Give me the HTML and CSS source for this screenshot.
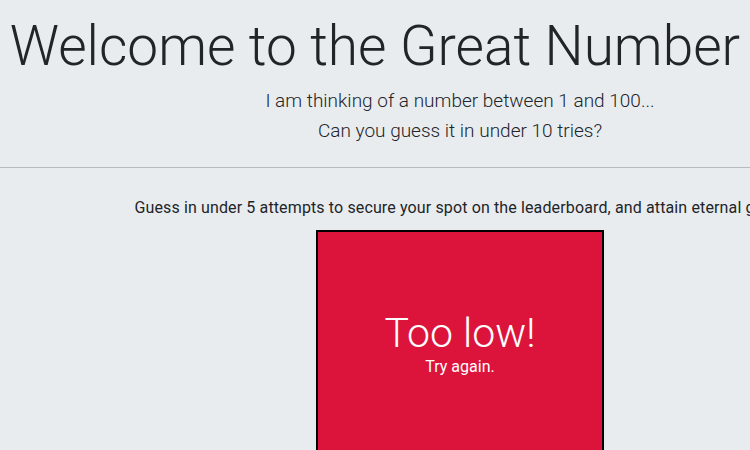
FILE: index.html
```html
<!DOCTYPE html>
<html lang="en">
<head>
<meta charset="utf-8">
<title>Great Number Game</title>
<link rel="stylesheet" href="styles.css">
</head>
<body>
<div class="page">
  <header class="jumbo">
    <h1 class="title">Welcome to the Great Number Game!</h1>
    <p class="lead">I am thinking of a number between 1 and 100...<br>Can you guess it in under 10 tries?</p>
  </header>
  <hr class="rule">
  <main class="content">
    <p class="note">Guess in under 5 attempts to secure your spot on the leaderboard, and attain eternal glory!</p>
    <div class="result">
      <h2 class="result-title">Too low!</h2>
      <p class="result-sub">Try again.</p>
    </div>
  </main>
</div>
</body>
</html>
```

FILE: styles.css
```css
html, body {
  margin: 0;
  padding: 0;
  background: #e9ecef;
  overflow: hidden;
}
.page {
  width: 920px;
  font-family: Roboto, "Open Sans", sans-serif;
  color: #212529;
}
.jumbo {
  text-align: center;
  padding: 13px 0 0;
}
.title {
  margin: 0;
  font-size: 55px;
  font-weight: 300;
  line-height: 66px;
  white-space: nowrap;
}
.lead {
  margin: 7px 0 0;
  font-size: 19px;
  font-weight: 300;
  line-height: 30px;
}
.rule {
  margin: 21px 0 0;
  border: 0;
  border-top: 1px solid #b8babd;
}
.content {
  text-align: center;
  padding-top: 28px;
}
.note {
  margin: 0;
  font-size: 16px;
  letter-spacing: 0.13px;
  line-height: 24px;
  white-space: nowrap;
}
.result {
  margin: 10px auto 0;
  width: 288px;
  height: 240px;
  background: #dc143c;
  border: 2px solid #000;
  color: #fff;
  display: flex;
  flex-direction: column;
  align-items: center;
  padding-top: 77px;
  box-sizing: border-box;
}
.result-title {
  margin: 0;
  font-size: 41px;
  font-weight: 300;
  line-height: 48px;
}
.result-sub {
  margin: 0;
  font-size: 16px;
  line-height: 20px;
}
```
